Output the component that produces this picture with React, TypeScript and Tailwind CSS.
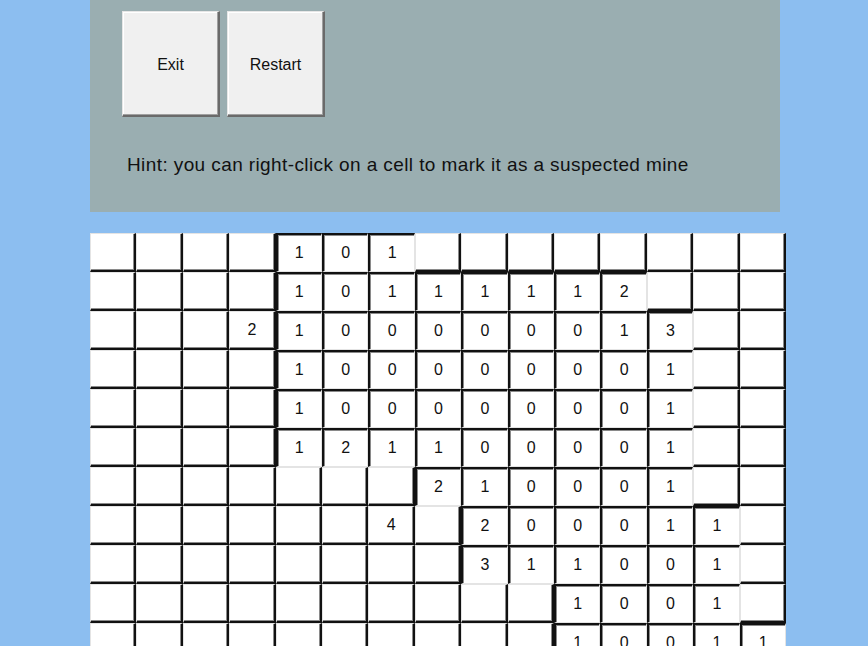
type Cell = { v: string; open: boolean };

// board rows: "." = covered, "#" = covered blank, digits prefixed by "o" = open, "r" = raised with digit
const rows: string[] = [
  ". . . . o1 o0 o1 . . . . . . . .",
  ". . . . o1 o0 o1 o1 o1 o1 o1 o2 . . .",
  ". . . r2 o1 o0 o0 o0 o0 o0 o0 o1 o3 . .",
  ". . . . o1 o0 o0 o0 o0 o0 o0 o0 o1 . .",
  ". . . . o1 o0 o0 o0 o0 o0 o0 o0 o1 . .",
  ". . . . o1 o2 o1 o1 o0 o0 o0 o0 o1 . .",
  ". . . . . . . o2 o1 o0 o0 o0 o1 . .",
  ". . . . . . r4 . o2 o0 o0 o0 o1 o1 .",
  ". . . . . . . . o3 o1 o1 o0 o0 o1 .",
  ". . . . . . . . . . o1 o0 o0 o1 .",
  ". . . . . . . . . . o1 o0 o0 o1 o1",
  ". . . . . . . . . . . . . . .",
];

function parse(row: string): Cell[] {
  return row.split(" ").map((t) => {
    if (t === ".") return { v: "", open: false };
    if (t[0] === "o") return { v: t.slice(1), open: true };
    return { v: t.slice(1), open: false };
  });
}

function Square({ cell }: { cell: Cell }) {
  const cls = cell.open
    ? "border-t-[2px] border-l-[2px] border-b border-r border-t-[#111] border-l-[#111] border-b-[#e4e4e4] border-r-[#e4e4e4] shadow-[inset_1px_1px_0_#8a8a8a]"
    : "border-t border-l border-b-[2px] border-r-[2px] border-t-[#e4e4e4] border-l-[#e4e4e4] border-b-[#111] border-r-[#111] shadow-[inset_-1px_-1px_0_#8a8a8a]";
  return (
    <div className={`flex h-[39px] items-center justify-center bg-white text-[16px] text-[#111] ${cls}`}>
      {cell.v}
    </div>
  );
}

function PanelButton({ label }: { label: string }) {
  return (
    <div className="flex h-[106px] w-[98px] items-center justify-center border-t border-l border-b-[2px] border-r-[2px] border-t-[#e6e6e6] border-l-[#e6e6e6] border-b-[#6a6a6a] border-r-[#6a6a6a] bg-[#f0f0f0] pt-[3px] text-[16px] text-[#111] shadow-[inset_-1px_-1px_0_#a0a0a0,inset_1px_1px_0_#ffffff]">
      {label}
    </div>
  );
}

export default function App() {
  return (
    <div className="h-[646px] w-[868px] overflow-hidden bg-[#8cbef0] font-['Liberation_Sans',Arial,sans-serif]">
      <div className="ml-[90px]">
        <div className="h-[212px] w-[690px] bg-[#9aaeb1] pl-[32px] pt-[11px]">
          <div className="flex gap-[7px]">
            <PanelButton label="Exit" />
            <PanelButton label="Restart" />
          </div>
          <p className="mt-[34px] pl-[5px] text-[19px] tracking-[0.4px] text-[#111]">
            Hint: you can right-click on a cell to mark it as a suspected mine
          </p>
        </div>
        <div className="mt-[21px] grid w-[696px] grid-cols-15">
          {rows.map((r, i) =>
            parse(r).map((c, j) => <Square key={`${i}-${j}`} cell={c} />)
          )}
        </div>
      </div>
    </div>
  );
}
